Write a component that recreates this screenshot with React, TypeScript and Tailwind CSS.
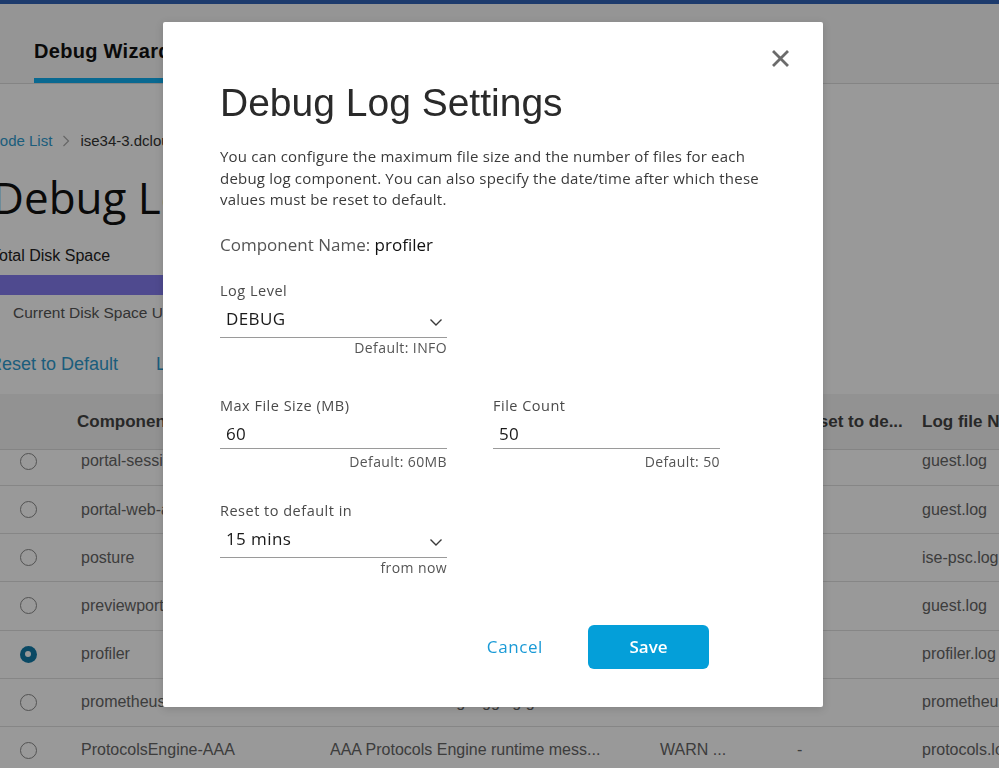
import React from "react";

const FONT = "font-['Liberation_Sans','Helvetica',sans-serif]";
const MODAL_FONT = "font-['Open_Sans','Liberation_Sans',sans-serif]";

type Row = {
  name: string;
  desc: string;
  level: string;
  reset: string;
  file: string;
  selected?: boolean;
};

const ROWS: Row[] = [
  { name: "portal-session-manager", desc: "Portal Session Manager debug mess...", level: "INFO", reset: "-", file: "guest.log" },
  { name: "portal-web-action", desc: "Base Portal and BYOD debug messa...", level: "INFO", reset: "-", file: "guest.log" },
  { name: "posture", desc: "Posture debug messages", level: "INFO", reset: "-", file: "ise-psc.log" },
  { name: "previewportal", desc: "Preview Portal debug messages", level: "INFO", reset: "-", file: "guest.log" },
  { name: "profiler", desc: "profiler debug messages", level: "DEBUG", reset: "-", file: "profiler.log", selected: true },
  { name: "prometheus", desc: "Prometheus debug logging gets", level: "INFO", reset: "-", file: "prometheus.log" },
  { name: "ProtocolsEngine-AAA", desc: "AAA Protocols Engine runtime mess...", level: "WARN ...", reset: "-", file: "protocols.log" },
];

function Chevron() {
  return (
    <svg width="14" height="9" viewBox="0 0 14 9" fill="none" className="mt-[6px]">
      <polyline points="1.5,1.5 7,7 12.5,1.5" stroke="#3a3a3a" strokeWidth="1.4" />
    </svg>
  );
}

function Radio({ on }: { on?: boolean }) {
  if (on) {
    return (
      <div className="w-[17px] h-[17px] rounded-full bg-[#117aa7] flex items-center justify-center">
        <div className="w-[6px] h-[6px] rounded-full bg-white" />
      </div>
    );
  }
  return <div className="w-[17px] h-[17px] rounded-full border border-[#8a8a8a] bg-white" />;
}

function Field({
  label,
  value,
  hint,
  select,
}: {
  label: string;
  value: string;
  hint: string;
  select?: boolean;
}) {
  return (
    <div className="w-[227px]">
      <div className="text-[14.5px] tracking-[0.5px] text-[#4a4a4a] leading-[20px]">{label}</div>
      {select ? (
        <div className="flex items-center justify-between h-[37px] pl-[6px] pr-[4px] border-b border-[#9a9a9a]">
          <span className="text-[17px] tracking-[0.4px] text-[#1a1a1a]">{value}</span>
          <Chevron />
        </div>
      ) : (
        <div className="flex items-center h-[33px] pt-[3px] pl-[6px] border-b border-[#9a9a9a]">
          <span className="text-[17px] tracking-[0.4px] text-[#1a1a1a]">{value}</span>
        </div>
      )}
      <div className={`text-right text-[14px] tracking-[0.4px] text-[#555] leading-[20px] ${select ? "" : "mt-[3px]"}`}>
        {hint}
      </div>
    </div>
  );
}

export default function App() {
  return (
    <div className={`relative h-screen w-full overflow-hidden bg-white ${FONT}`}>
      {/* background page */}
      <div className="h-1 bg-[#3163b6]" />
      <div className="h-[80px] bg-[#f8f8f8] border-b border-[#dcdcdc] flex items-end pl-[34px]">
        <div className="w-[140px] h-[80px] flex flex-col justify-end">
          <div className="text-[20px] tracking-[0.3px] font-bold text-[#111] mb-[12px] whitespace-nowrap">Debug Wizard</div>
          <div className="h-[5px] bg-[#0fb0f2]" />
        </div>
      </div>

      <div className="-ml-[11px]">
        <div className="mt-[46px] flex items-center gap-[10px] text-[15px]">
          <span className="text-[#2f9ccf]">Node List</span>
          <svg width="8" height="12" viewBox="0 0 8 12" fill="none">
            <polyline points="1.5,1 6.5,6 1.5,11" stroke="#aaa" strokeWidth="1.2" />
          </svg>
          <span className="text-[#333]">ise34-3.dcloud.cisco.com</span>
        </div>
        <div className={`mt-[18px] ml-[3px] text-[44px] leading-[52px] text-[#111] whitespace-nowrap ${MODAL_FONT}`}>
          Debug Level Configuration
        </div>
        <div className="mt-[21px] ml-[2px] text-[16px] text-[#222]">Total Disk Space</div>
        <div className="mt-[7px] ml-[11px] h-[20px] w-[600px] bg-[#847cee]" />
        <div className="mt-[6px] ml-[5px] flex items-center gap-[13px] text-[15.5px] text-[#555] whitespace-nowrap">
          <span className="w-[6px] h-[6px] rounded-full bg-[#847cee]" />
          Current Disk Space Used
        </div>
        <div className="mt-[27px] flex items-center gap-[38px] text-[18px] text-[#2f9ccf] whitespace-nowrap">
          <span>Reset to Default</span>
          <span>Log Filter</span>
        </div>
      </div>

      {/* table */}
      <div className="mt-[16px]">
        <div className="h-[56px] bg-[#f3f3f3] border-b border-[#dcdcdc] grid grid-cols-[77px_253px_330px_137px_125px_1fr] items-center text-[17px] font-bold text-[#444] whitespace-nowrap">
          <div />
          <div>Component Name</div>
          <div>Description</div>
          <div>Log Level</div>
          <div>Reset to de...</div>
          <div>Log file Name</div>
        </div>
        <div className="h-[330px] overflow-hidden">
          <div className="-mt-[12px]">
            {ROWS.map((r) => (
              <div
                key={r.name}
                className="h-[48.2px] border-b border-[#e0e0e0] grid grid-cols-[56px_25px_249px_330px_137px_125px_1fr] items-center text-[16px] text-[#666] whitespace-nowrap overflow-hidden"
              >
                <div className="flex justify-center">
                  <Radio on={r.selected} />
                </div>
                <div />
                <div className="overflow-hidden">{r.name}</div>
                <div className="overflow-hidden">{r.desc}</div>
                <div>{r.level}</div>
                <div>{r.reset}</div>
                <div>{r.file}</div>
              </div>
            ))}
          </div>
        </div>
      </div>

      {/* overlay */}
      <div className="fixed inset-0 bg-black/40" />

      {/* modal */}
      <div
        className={`absolute left-[163px] top-[22px] w-[660px] h-[685px] bg-white rounded-[2px] shadow-[0_2px_8px_rgba(0,0,0,0.15)] ${MODAL_FONT}`}
      >
        <button className="absolute right-[30px] top-[24px] p-1">
          <svg width="17" height="17" viewBox="0 0 17 17">
            <path d="M2 2L15 15M15 2L2 15" stroke="#6b6b6b" strokeWidth="2.8" strokeLinecap="square" />
          </svg>
        </button>
        <div className="pl-[57px] pr-[40px] pt-[59px]">
          <h2 className={`text-[39px] leading-[44px] text-[#2a2a2a] font-normal ${FONT}`}>Debug Log Settings</h2>
          <p className="mt-[21px] text-[15px] tracking-[0.2px] leading-[21.5px] text-[#3a3a3a] w-[552px]">
            You can configure the maximum file size and the number of files for each debug log component. You can also
            specify the date/time after which these values must be reset to default.
          </p>
          <div className="mt-[21px] text-[17px] text-[#555]">
            Component Name: <span className="text-[#111]">profiler</span>
          </div>
          <div className="mt-[24px]">
            <Field label="Log Level" value="DEBUG" hint="Default: INFO" select />
          </div>
          <div className="mt-[38px] flex gap-[46px]">
            <Field label="Max File Size (MB)" value="60" hint="Default: 60MB" />
            <Field label="File Count" value="50" hint="Default: 50" />
          </div>
          <div className="mt-[29px]">
            <Field label="Reset to default in" value="15 mins" hint="from now" select />
          </div>
          <div className="mt-[47px] flex justify-end items-center gap-[45px] pr-[74px]">
            <button className="text-[17px] tracking-[0.6px] text-[#1a9ad6]">Cancel</button>
            <button className="w-[121px] h-[44px] rounded-[6px] bg-[#049fd9] text-white text-[17px] font-semibold">
              Save
            </button>
          </div>
        </div>
      </div>
    </div>
  );
}
